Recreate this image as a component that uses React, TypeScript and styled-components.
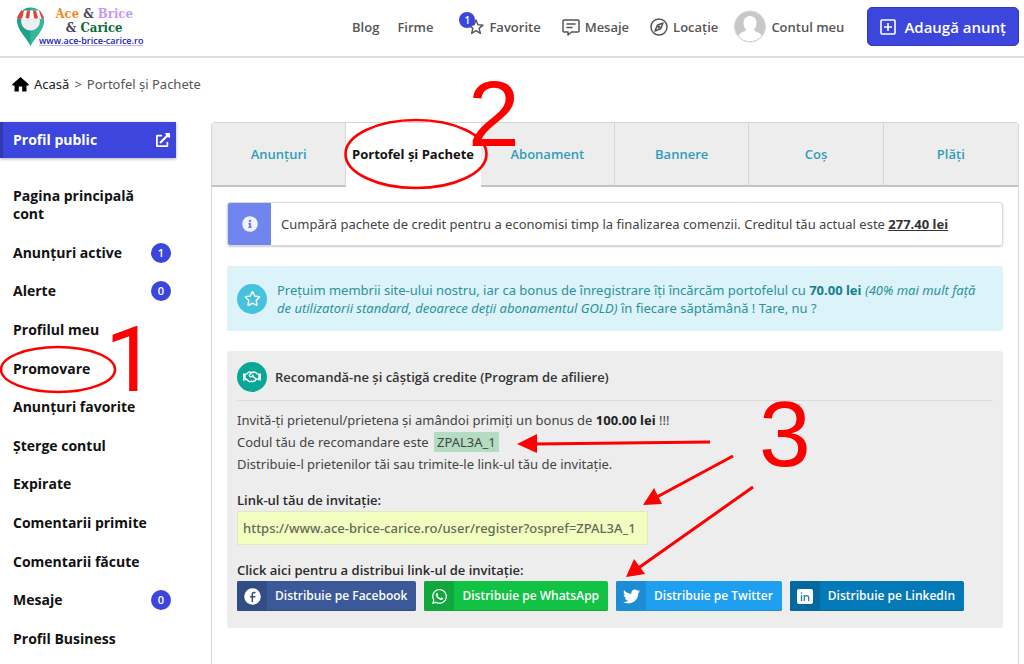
import React from "react";
import styled, { createGlobalStyle, css } from "styled-components";
import { FaWhatsapp, FaTwitter, FaInfoCircle, FaRegStar, FaRegHandshake, FaExternalLinkAlt } from "react-icons/fa";

const Global = createGlobalStyle`
  *, *::before, *::after { box-sizing: border-box; }
  body {
    margin: 0;
    background: #fff;
    color: #444;
    font: 400 13px/18px "Noto Sans", "Open Sans", sans-serif;
  }
  a { color: inherit; text-decoration: none; }
  button, input { font: inherit; color: inherit; }
  h2, p { margin: 0; }
`;

const Page = styled.div`
  position: relative;
  display: flex;
  flex-direction: column;
  min-height: 100vh;
  overflow: hidden;
`;

const Header = styled.header`
  display: flex;
  align-items: center;
  justify-content: space-between;
  height: 58px;
  padding: 0 5px 3px 16px;
  border-bottom: 2px solid #dcdcdc;
`;

const Logo = styled.a`
  display: flex;
  align-items: flex-end;
  svg { flex: none; }
`;

const LogoWords = styled.span`
  display: flex;
  flex-direction: column;
  align-items: center;
  margin-left: -6px;
  font: 700 13px/14px "DejaVu Serif Condensed", "DejaVu Serif", serif;
  white-space: nowrap;
`;

const LogoLine = styled.span`
  padding-left: 6px;
`;

const Word = styled.span<{ $color: string }>`
  color: ${(p) => p.$color};
`;

const LogoUrl = styled.span`
  color: #1c1cb4;
  font: 600 9px/12px "Open Sans", sans-serif;
  text-decoration: underline;
  text-decoration-color: #b9b9e8;
`;

const Nav = styled.nav`
  display: flex;
  align-items: center;
  color: #555;
  font-family: "Open Sans", sans-serif;
  font-weight: 600;
`;

const NavLink = styled.a<{ $gap: number }>`
  position: relative;
  display: flex;
  align-items: center;
  gap: 5px;
  margin-right: ${(p) => p.$gap}px;
  white-space: nowrap;
  svg { flex: none; }
`;

const badge = css`
  display: flex;
  align-items: center;
  justify-content: center;
  border-radius: 50%;
  background: #3c46dc;
  color: #fff;
  font-weight: 600;
`;

const NavBadge = styled.span`
  ${badge}
  position: absolute;
  left: -9px;
  top: -6px;
  width: 16px;
  height: 16px;
  font-size: 10px;
`;

const AddButton = styled.button`
  display: flex;
  align-items: center;
  gap: 8px;
  height: 39px;
  padding: 0 12px;
  border: 1px solid #3239b8;
  border-radius: 5px;
  background: #3c46dc;
  color: #fff;
  font-size: 15px;
  font-weight: 600;
  white-space: nowrap;
`;

const Crumbs = styled.nav`
  display: flex;
  align-items: center;
  gap: 5px;
  padding: 17px 12px 0;
  color: #555;
`;

const CrumbHome = styled.a`
  display: flex;
  align-items: center;
  gap: 5px;
  color: #222;
`;

const Columns = styled.div`
  display: flex;
  flex: 1;
  align-items: stretch;
  gap: 35px;
  padding: 29px 5px 0 0;
`;

const Sidebar = styled.aside`
  flex: none;
  width: 176px;
  font-family: "Open Sans", sans-serif;
`;

const PublicProfile = styled.a`
  display: flex;
  align-items: center;
  justify-content: space-between;
  height: 36px;
  padding: 0 6px 0 10px;
  border-left: 3px solid #3239b0;
  background: #3c46dc;
  box-shadow: 0 1px 3px rgba(0, 0, 0, 0.3);
  color: #fff;
  font-size: 14px;
  font-weight: 700;
`;

const Menu = styled.ul`
  display: flex;
  flex-direction: column;
  justify-content: space-between;
  min-height: 461px;
  margin: 29px 0 0;
  padding: 0 5px 0 13px;
  list-style: none;
  color: #111;
  font-size: 14px;
  font-weight: 700;
  a { max-width: 134px; }
`;

const MenuItem = styled.li`
  display: flex;
  align-items: center;
  justify-content: space-between;
`;

const MenuBadge = styled.span`
  ${badge}
  flex: none;
  width: 20px;
  height: 20px;
  margin: -1px 0;
  font-size: 11px;
`;

const Panel = styled.main`
  flex: 1;
  min-width: 0;
  border: 1px solid #d6d6d6;
  border-bottom: 0;
  border-radius: 4px 4px 0 0;
`;

const Tabs = styled.nav`
  display: grid;
  grid-template-columns: repeat(6, 1fr);
  height: 64px;
  font-family: "Open Sans", sans-serif;
`;

const Tab = styled.a<{ $active?: boolean }>`
  display: flex;
  align-items: center;
  justify-content: center;
  border-right: 1px solid #d6d6d6;
  border-bottom: 2px solid #c4c4c4;
  background: #ededed;
  color: #2f9dba;
  font-weight: 600;
  white-space: nowrap;
  &:last-child { border-right: 0; }
  ${(p) =>
    p.$active &&
    css`
      border-color: #fff;
      background: #fff;
      color: #111;
      font-weight: 700;
    `}
`;

const PanelBody = styled.div`
  display: flex;
  flex-direction: column;
  gap: 20px;
  padding: 15px 15px 0;
`;

const CreditNote = styled.div`
  display: flex;
  height: 44px;
  overflow: hidden;
  border: 1px solid #d8d8d8;
  border-radius: 3px;
  box-shadow: 0 1px 2px rgba(0, 0, 0, 0.2);
`;

const NoteIcon = styled.span`
  display: flex;
  flex: none;
  align-items: center;
  justify-content: center;
  width: 43px;
  background: #7086ee;
  color: #f0f2fd;
`;

const NoteText = styled.p`
  align-self: center;
  padding-left: 10px;
  white-space: nowrap;
  a { color: #333; font-weight: 700; text-decoration: underline; }
`;

const Bonus = styled.div`
  display: flex;
  align-items: center;
  gap: 10px;
  height: 65px;
  padding: 0 10px;
  border-radius: 3px;
  background: #dcf3f9;
  color: #2b929c;
  white-space: nowrap;
  strong { color: #15808c; }
`;

const RoundIcon = styled.span<{ $bg: string }>`
  display: flex;
  flex: none;
  align-items: center;
  justify-content: center;
  width: 30px;
  height: 30px;
  border-radius: 50%;
  background: ${(p) => p.$bg};
  color: #fff;
`;

const Referral = styled.section`
  padding: 11px 10px 17px;
  border-radius: 3px;
  background: #ededed;
`;

const ReferralHead = styled.div`
  display: flex;
  align-items: center;
  gap: 8px;
  padding-bottom: 8px;
  border-bottom: 1px solid #dcdcdc;
  h2 { color: #333; font: 600 13px/18px "Open Sans", sans-serif; }
`;

const Lines = styled.p`
  margin-top: 8px;
  line-height: 22px;
  strong { color: #222; }
`;

const Code = styled.span`
  margin-left: 2px;
  padding: 1px 3px;
  background: #b3dcc2;
`;

const Label = styled.label`
  display: block;
  margin-top: 16px;
  color: #2a2a2a;
  font-family: "Open Sans", sans-serif;
  font-weight: 600;
`;

const LinkInput = styled.input`
  display: block;
  width: 411px;
  max-width: 100%;
  height: 34px;
  margin-top: 2px;
  padding: 0 5px;
  border: 1px solid #e2eaba;
  background: #f1fec0;
  color: #66695a;
  font-weight: 500;
`;

const ShareRow = styled.div`
  display: flex;
  gap: 8px;
  margin-top: 2px;
`;

const Share = styled.button<{ $bg: string; $edge: string }>`
  display: flex;
  align-items: center;
  height: 30px;
  padding: 0 9px 0 0;
  border: 0;
  border-radius: 2px;
  background: ${(p) => p.$bg};
  box-shadow: inset 0 -1px 0 ${(p) => p.$edge};
  color: #fff;
  font-family: "Open Sans", sans-serif;
  font-size: 12px;
  font-weight: 600;
  white-space: nowrap;
  span {
    display: flex;
    align-items: center;
    justify-content: center;
    width: 30px;
    height: 30px;
    margin-right: 8px;
    border-radius: 2px 0 0 2px;
    background: ${(p) => p.$edge};
  }
`;

const Marks = styled.svg`
  position: absolute;
  left: 0;
  top: 0;
  pointer-events: none;
`;

const Pin = () => (
  <svg width="29" height="40" viewBox="0 0 29 40" aria-hidden="true">
    <path d="M14.5 39C11 31 1 23 1 14a13.500 13.500 0 0 1 27 0c0 9-10 17-13.500 25z" fill="#1fa187" />
    <path d="M14.500 39V1A13.500 13.500 0 0 1 28 14c0 9-10 17-13.500 25z" fill="#35b79a" />
    <circle cx="14.500" cy="14" r="9.500" fill="#ededf2" />
    <path d="M5 3.500h19l4 7q-3 3-5.400 0-2.700 3-5.400 0-2.700 3-5.400 0-2.700 3-5.400 0-2.400 3-5.400 0z" fill="#fff" />
    <path d="M5 3.500h3L6.400 10.500q-3 3-5.400 0zM11 3.500h3l-.5 7q-2 2-4 .3zM17 3.500h3l2 7.300q-2 2-4 0zM23 3.500h1l4 7q-1 1.800-2.500 1.200z" fill="#d9463d" />
  </svg>
);

const HomeIcon = () => (
  <svg width="17" height="15" viewBox="0 0 17 15" fill="#000" aria-hidden="true">
    <path d="M8.500 0L17 7.600l-.8.9h-1.700V14.500h-4.300V9.500H6.800v5H2.500v-6H.8L0 7.600z" />
  </svg>
);

const FacebookIcon = () => (
  <svg width="17" height="17" viewBox="0 0 17 17" aria-hidden="true">
    <circle cx="8.500" cy="8.500" r="8.300" fill="#fff" />
    <path d="M8.300 14V6.600Q8.300 4.600 10.200 4.600H11.600M6 8.700H11.400" fill="none" stroke="#334d84" strokeWidth="1.500" />
  </svg>
);

const LinkedinIcon = () => (
  <svg width="16" height="15" viewBox="0 0 16 15" aria-hidden="true">
    <rect width="16" height="15" rx="2" fill="#fff" />
    <path d="M4.500 6v6M7.300 12V6M7.300 8.600Q7.600 6.700 9.600 6.700 11.700 6.700 11.700 9V12M4.500 3.200v1.500" fill="none" stroke="#2c7dac" strokeWidth="1.300" />
  </svg>
);

const StarIcon = () => (
  <svg width="16" height="16" viewBox="0 0 16 16" fill="none" stroke="#555" strokeWidth="1.400" strokeLinejoin="round" aria-hidden="true">
    <path d="M8 1l1.900 4.700 5.100.4-3.900 3.300 1.300 5L8 11.700l-4.400 2.700 1.300-5L1 6.100l5.100-.4z" />
  </svg>
);

const MessageIcon = () => (
  <svg width="18" height="18" viewBox="0 0 18 18" fill="none" stroke="#555" strokeWidth="1.500" strokeLinejoin="round" strokeLinecap="round" aria-hidden="true">
    <path d="M2 2h14q1 0 1 1v10q0 1-1 1H9.500L6 17v-3H2q-1 0-1-1V3q0-1 1-1zM5 6h8M5 9.500h5" />
  </svg>
);

const CompassIcon = () => (
  <svg width="18" height="18" viewBox="0 0 18 18" fill="none" stroke="#555" strokeWidth="1.500" strokeLinejoin="round" aria-hidden="true">
    <circle cx="9" cy="9" r="8" />
    <path d="M13 5l-2.300 5.700L5 13l2.300-5.700z" />
    <circle cx="9" cy="9" r=".8" />
  </svg>
);

const Avatar = () => (
  <svg width="32" height="33" viewBox="0 0 32 33" aria-hidden="true">
    <circle cx="16" cy="16.500" r="15.500" fill="#c8c8c8" />
    <path d="M16 6c4 0 6.500 3 6.500 7 0 3-1 5-2.500 6.500 1 3 6 2 7.500 6.500a15 15 0 0 1-23 0C6 21.500 11 22.500 12 19.500 10.500 18 9.500 16 9.500 13c0-4 2.500-7 6.500-7z" fill="#fff" />
    <circle cx="16" cy="16.500" r="15.500" fill="none" stroke="#d4d4d4" strokeWidth="1" />
  </svg>
);

const PlusBox = () => (
  <svg width="16" height="16" viewBox="0 0 16 16" fill="none" stroke="#fff" strokeWidth="1.600" aria-hidden="true">
    <rect x="1" y="1" width="14" height="14" rx="1" />
    <path d="M8 4v8M4 8h8" />
  </svg>
);

const menu: { label: string; count?: number }[] = [
  { label: "Pagina principală cont" },
  { label: "Anunțuri active", count: 1 },
  { label: "Alerte", count: 0 },
  { label: "Profilul meu" },
  { label: "Promovare" },
  { label: "Anunțuri favorite" },
  { label: "Șterge contul" },
  { label: "Expirate" },
  { label: "Comentarii primite" },
  { label: "Comentarii făcute" },
  { label: "Mesaje", count: 0 },
  { label: "Profil Business" },
];

const tabs = ["Anunțuri", "Portofel și Pachete", "Abonament", "Bannere", "Coș", "Plăți"];

const shares = [
  { name: "Facebook", bg: "#3b5998", edge: "#334d84", icon: <FacebookIcon /> },
  { name: "WhatsApp", bg: "#12c245", edge: "#10a83c", icon: <FaWhatsapp size={17} /> },
  { name: "Twitter", bg: "#1f9ff0", edge: "#1c8cd4", icon: <FaTwitter size={17} /> },
  { name: "LinkedIn", bg: "#0479b8", edge: "#04699f", icon: <LinkedinIcon /> },
];

export default function App() {
  return (
    <Page>
      <Global />
      <Header>
        <Logo href="#">
          <Pin />
          <LogoWords>
            <LogoLine>
              <Word $color="#f58a1a">Ace</Word> <Word $color="#4a4558">&amp;</Word> <Word $color="#c79bf0">Brice</Word>
            </LogoLine>
            <LogoLine>
              <Word $color="#4a4558">&amp;</Word> <Word $color="#0b6b38">Carice</Word>
            </LogoLine>
            <LogoUrl>www.ace-brice-carice.ro</LogoUrl>
          </LogoWords>
        </Logo>
        <Nav>
          <NavLink href="#" $gap={18}>Blog</NavLink>
          <NavLink href="#" $gap={35}>Firme</NavLink>
          <NavLink href="#" $gap={21}>
            <StarIcon />
            <NavBadge>1</NavBadge>
            Favorite
          </NavLink>
          <NavLink href="#" $gap={21}>
            <MessageIcon />
            Mesaje
          </NavLink>
          <NavLink href="#" $gap={16}>
            <CompassIcon />
            Locație
          </NavLink>
          <NavLink href="#" $gap={23}>
            <Avatar />
            Contul meu
          </NavLink>
          <AddButton type="button">
            <PlusBox />
            Adaugă anunț
          </AddButton>
        </Nav>
      </Header>

      <Crumbs>
        <CrumbHome href="#">
          <HomeIcon />
          Acasă
        </CrumbHome>
        <span>&gt;</span>
        <span>Portofel și Pachete</span>
      </Crumbs>

      <Columns>
        <Sidebar>
          <PublicProfile href="#">
            Profil public
            <FaExternalLinkAlt size={14} />
          </PublicProfile>
          <Menu>
            {menu.map((m) => (
              <MenuItem key={m.label}>
                <a href="#">{m.label}</a>
                {m.count !== undefined && <MenuBadge>{m.count}</MenuBadge>}
              </MenuItem>
            ))}
          </Menu>
        </Sidebar>

        <Panel>
          <Tabs>
            {tabs.map((t, i) => (
              <Tab key={t} href="#" $active={i === 1}>
                {t}
              </Tab>
            ))}
          </Tabs>
          <PanelBody>
            <CreditNote>
              <NoteIcon>
                <FaInfoCircle size={16} />
              </NoteIcon>
              <NoteText>
                Cumpără pachete de credit pentru a economisi timp la finalizarea comenzii. Creditul tău actual este <a href="#">277.40 lei</a>
              </NoteText>
            </CreditNote>

            <Bonus>
              <RoundIcon $bg="#45c3de">
                <FaRegStar size={17} />
              </RoundIcon>
              <p>
                Prețuim membrii site-ului nostru, iar ca bonus de înregistrare îți încărcăm portofelul cu <strong>70.00 lei</strong>{" "}
                <em>
                  (40% mai mult față
                  <br />
                  de utilizatorii standard, deoarece deții abonamentul GOLD)
                </em>{" "}
                în fiecare săptămână ! Tare, nu ?
              </p>
            </Bonus>

            <Referral>
              <ReferralHead>
                <RoundIcon $bg="#08a896">
                  <FaRegHandshake size={18} />
                </RoundIcon>
                <h2>Recomandă-ne și câștigă credite (Program de afiliere)</h2>
              </ReferralHead>
              <Lines>
                Invită-ți prietenul/prietena și amândoi primiți un bonus de <strong>100.00 lei</strong> !!!
                <br />
                Codul tău de recomandare este <Code>ZPAL3A_1</Code>
                <br />
                Distribuie-l prietenilor tăi sau trimite-le link-ul tău de invitație.
              </Lines>
              <Label htmlFor="invite">Link-ul tău de invitație:</Label>
              <LinkInput id="invite" readOnly defaultValue="https://www.ace-brice-carice.ro/user/register?ospref=ZPAL3A_1" />
              <Label as="p">Click aici pentru a distribui link-ul de invitație:</Label>
              <ShareRow>
                {shares.map(({ name, bg, edge, icon }) => (
                  <Share key={name} type="button" $bg={bg} $edge={edge}>
                    <span>{icon}</span>
                    Distribuie pe {name}
                  </Share>
                ))}
              </ShareRow>
            </Referral>
          </PanelBody>
        </Panel>
      </Columns>

      <Marks width="1024" height="664" viewBox="0 0 1024 664" fill="none" stroke="#fe0000" strokeWidth="2.600">
        <ellipse cx="58" cy="369.500" rx="57" ry="22.500" />
        <ellipse cx="416" cy="154" rx="70.500" ry="34" />
        <path d="M710 442L534 444M733 456L655 498M753 487L637 569" strokeWidth="3" />
        <g fill="#fe0000" stroke="none">
          <path d="M517 444l20-10v19zM643 505l11-17 8 16zM626 577l8-18 11 15z" />
          <g fontFamily="Liberation Sans, Arial, sans-serif" fontSize="93">
            <text x="105" y="391" fontFamily="Roboto, sans-serif" fontSize="91">1</text>
            <text x="468" y="146">2</text>
            <text x="759" y="466">3</text>
          </g>
        </g>
      </Marks>
    </Page>
  );
}
